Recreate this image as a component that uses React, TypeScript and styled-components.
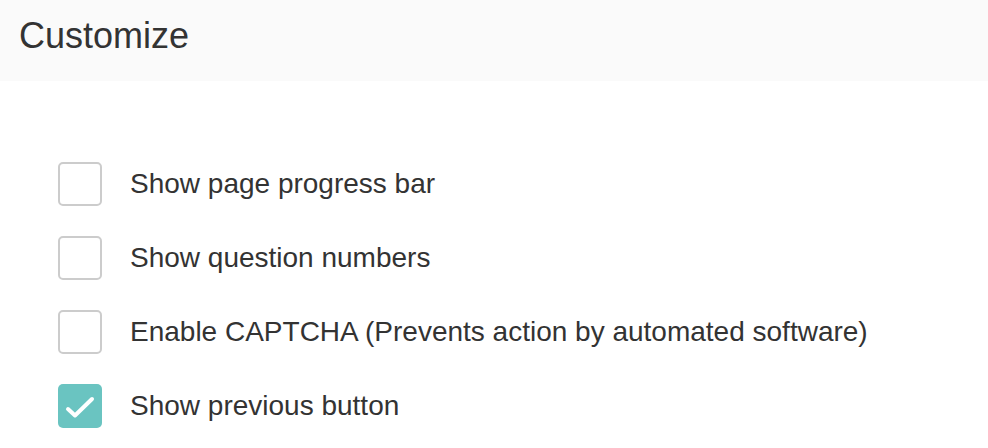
import styled, { createGlobalStyle } from "styled-components";

const GlobalStyle = createGlobalStyle`
  html, body {
    margin: 0;
    padding: 0;
    background: #ffffff;
  }
  body {
    font-family: "Liberation Sans", Arial, Helvetica, sans-serif;
    color: #333333;
  }
`;

type Option = {
  label: string;
  checked: boolean;
};

const options: Option[] = [
  { label: "Show page progress bar", checked: false },
  { label: "Show question numbers", checked: false },
  { label: "Enable CAPTCHA (Prevents action by automated software)", checked: false },
  { label: "Show previous button", checked: true },
];

const App = () => {
  return (
    <Page>
      <GlobalStyle />
      <Header>
        <Title>Customize</Title>
      </Header>
      <OptionList>
        {options.map((option) => (
          <OptionRow key={option.label}>
            <Box $checked={option.checked}>
              {option.checked && (
                <svg width="44" height="44" viewBox="0 0 44 44">
                  <path
                    d="M10 25 L17 31.5 L34 15"
                    fill="none"
                    stroke="#ffffff"
                    strokeWidth="4"
                    strokeLinecap="round"
                    strokeLinejoin="round"
                  />
                </svg>
              )}
            </Box>
            <Label>{option.label}</Label>
          </OptionRow>
        ))}
      </OptionList>
    </Page>
  );
};

const Page = styled.div`
  width: 988px;
  height: 448px;
  overflow: hidden;
  background: #ffffff;
`;

const Header = styled.div`
  height: 81px;
  background: #fafafa;
  padding-left: 19px;
  display: flex;
  align-items: center;
  box-sizing: border-box;
`;

const Title = styled.h1`
  margin: 0 0 10px 0;
  font-size: 36px;
  font-weight: 400;
  color: #333333;
  line-height: 1;
`;

const OptionList = styled.div`
  display: flex;
  flex-direction: column;
  gap: 30px;
  padding: 81px 0 0 58px;
`;

const OptionRow = styled.label`
  display: flex;
  align-items: center;
  gap: 28px;
  height: 44px;
`;

type BoxProps = {
  $checked: boolean;
};

const Box = styled.span<BoxProps>`
  width: 44px;
  height: 44px;
  box-sizing: border-box;
  border-radius: 5px;
  flex-shrink: 0;
  border: ${({ $checked }) => ($checked ? "none" : "2px solid #cccccc")};
  background: ${({ $checked }) => ($checked ? "#6ac4c1" : "#ffffff")};
  display: flex;
  align-items: center;
  justify-content: center;
`;

const Label = styled.span`
  font-size: 28px;
  color: #333333;
  line-height: 1;
`;

export default App;
